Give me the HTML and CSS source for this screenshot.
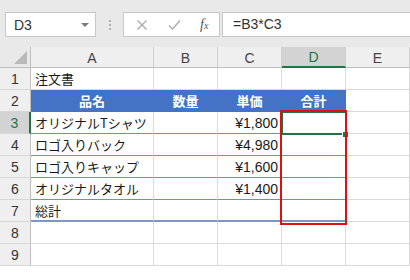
FILE: index.html
```html
<!DOCTYPE html>
<html lang="ja">
<head>
<meta charset="utf-8">
<link rel="stylesheet" href="styles.css">
</head>
<body>
<div class="toolbar">
  <div class="namebox"><span class="nb-text">D3</span><span class="nb-arrow"></span></div>
  <div class="dots"><span></span><span></span><span></span></div>
  <div class="fxbox">
    <svg class="ico" width="12" height="12" viewBox="0 0 12 12"><path d="M1.5 1.5 L10.5 10.5 M10.5 1.5 L1.5 10.5" stroke="#a8a8a8" stroke-width="1.2" fill="none"/></svg>
    <svg class="ico" width="13" height="12" viewBox="0 0 13 12"><path d="M1 6.5 L4.5 10 L12 1.5" stroke="#a8a8a8" stroke-width="1.2" fill="none"/></svg>
    <span class="fx">f<sub>x</sub></span>
  </div>
  <div class="formula">=B3*C3</div>
</div>
<div class="sheet">
  <div class="corner"><span class="tri"></span></div>
  <div class="ch">A</div><div class="ch">B</div><div class="ch">C</div><div class="ch ch-sel">D</div><div class="ch">E</div>

  <div class="rh">1</div><div class="c">注文書</div><div class="c"></div><div class="c"></div><div class="c"></div><div class="c"></div>

  <div class="rh">2</div><div class="c hd">品名</div><div class="c hd">数量</div><div class="c hd">単価</div><div class="c hd">合計</div><div class="c"></div>

  <div class="rh rh-sel">3</div><div class="c tb">オリジナルTシャツ</div><div class="c tb"></div><div class="c tb num">¥1,800</div><div class="c tb"></div><div class="c"></div>

  <div class="rh">4</div><div class="c tb">ロゴ入りバック</div><div class="c tb"></div><div class="c tb num">¥4,980</div><div class="c tb"></div><div class="c"></div>

  <div class="rh">5</div><div class="c tb">ロゴ入りキャップ</div><div class="c tb"></div><div class="c tb num">¥1,600</div><div class="c tb"></div><div class="c"></div>

  <div class="rh">6</div><div class="c tb">オリジナルタオル</div><div class="c tb"></div><div class="c tb num">¥1,400</div><div class="c tb"></div><div class="c"></div>

  <div class="rh">7</div><div class="c tt">総計</div><div class="c tt"></div><div class="c tt"></div><div class="c tt"></div><div class="c"></div>

  <div class="rh">8</div><div class="c"></div><div class="c"></div><div class="c"></div><div class="c"></div><div class="c"></div>

  <div class="rh">9</div><div class="c"></div><div class="c"></div><div class="c"></div><div class="c"></div><div class="c"></div>

  <div class="sel"></div>
  <div class="handle"></div>
  <div class="redbox"></div>
</div>
</body>
</html>
```

FILE: styles.css
```css
* { box-sizing: border-box; }
html, body {
  margin: 0;
  padding: 0;
  width: 410px;
  height: 280px;
  overflow: hidden;
  background: #ffffff;
  font-family: "Liberation Sans", "Noto Sans CJK JP", sans-serif;
}

.toolbar {
  height: 47px;
  background: #e9e9e9;
  display: flex;
  align-items: flex-start;
  padding: 12px 0 0 5px;
}

.namebox {
  width: 91px;
  height: 25px;
  background: #fff;
  border: 1px solid #c8c8c8;
  display: flex;
  align-items: center;
  justify-content: space-between;
  padding: 0 6px 0 8px;
}
.nb-text {
  font-size: 14px;
  color: #333;
}
.nb-arrow {
  width: 0;
  height: 0;
  border-left: 4px solid transparent;
  border-right: 4px solid transparent;
  border-top: 4px solid #7a7a7a;
}

.dots {
  width: 27px;
  height: 25px;
  display: flex;
  flex-direction: column;
  align-items: center;
  justify-content: center;
  gap: 2px;
}
.dots span {
  width: 2px;
  height: 2px;
  background: #b0b0b0;
}

.fxbox {
  width: 97px;
  height: 25px;
  background: #fff;
  border: 1px solid #c8c8c8;
  display: flex;
  align-items: center;
  padding-left: 12px;
  gap: 20px;
}
.fx {
  font-family: "Liberation Serif", serif;
  font-style: italic;
  font-size: 14px;
  color: #555;
  margin-left: -1px;
}
.fx sub {
  font-size: 10px;
  vertical-align: 0;
  margin-left: 0;
}

.formula {
  flex: 1;
  height: 25px;
  margin-left: 2px;
  background: #fff;
  border: 1px solid #c8c8c8;
  border-right: none;
  padding-left: 10px;
  font-size: 14px;
  line-height: 23px;
  color: #333;
}

.sheet {
  position: relative;
  display: grid;
  grid-template-columns: 31px 123px 64px 64px 64px 64px;
  grid-template-rows: 21px repeat(9, 22px);
  background: #fff;
  font-size: 13px;
  color: #222;
}

.corner {
  background: #e9e9e9;
  border-right: 1px solid #bfbfbf;
  border-bottom: 1px solid #bfbfbf;
  position: relative;
}
.tri {
  position: absolute;
  right: 3px;
  bottom: 3px;
  width: 0;
  height: 0;
  border-left: 13px solid transparent;
  border-bottom: 13px solid #b9b9b9;
}

.ch {
  background: #efefef;
  border-right: 1px solid #cfcfcf;
  border-bottom: 1px solid #bfbfbf;
  display: flex;
  align-items: center;
  justify-content: center;
  font-size: 14px;
  color: #444;
  padding-top: 1px;
}
.ch-sel {
  background: #d3d3d3;
  color: #217346;
  border-bottom: 2px solid #217346;
}

.rh {
  background: #efefef;
  border-right: 1px solid #bfbfbf;
  border-bottom: 1px solid #d6d6d6;
  display: flex;
  align-items: center;
  justify-content: center;
  font-size: 14px;
  color: #333;
}
.rh-sel {
  background: #d3d3d3;
  color: #217346;
  border-right: 2px solid #217346;
}

.c {
  border-right: 1px solid #d9d9d9;
  border-bottom: 1px solid #d9d9d9;
  padding: 0 4px;
  display: flex;
  align-items: center;
  white-space: nowrap;
  overflow: hidden;
  font-family: "Noto Sans CJK JP", sans-serif;
  font-size: 13px;
  color: #1a1a1a;
}
.hd {
  background: #4472c4;
  color: #fff;
  font-weight: bold;
  justify-content: center;
  border-right-color: #4472c4;
  border-bottom-color: #4472c4;
}
.tb {
  border-bottom: 1px solid #6f8fc9;
}
.tt {
  border-bottom: 2px solid #7d96c6;
}
.num {
  justify-content: flex-end;
  font-family: "Liberation Sans", sans-serif;
  font-size: 14px;
  padding-right: 3px;
}

.sel {
  position: absolute;
  left: 281px;
  top: 64px;
  width: 66px;
  height: 24px;
  border: 2px solid #217346;
}
.handle {
  position: absolute;
  left: 342px;
  top: 84px;
  width: 7px;
  height: 7px;
  background: #217346;
  border: 1px solid #fff;
}
.redbox {
  position: absolute;
  left: 280px;
  top: 63px;
  width: 67px;
  height: 115px;
  border: 2px solid #e01010;
}
```
